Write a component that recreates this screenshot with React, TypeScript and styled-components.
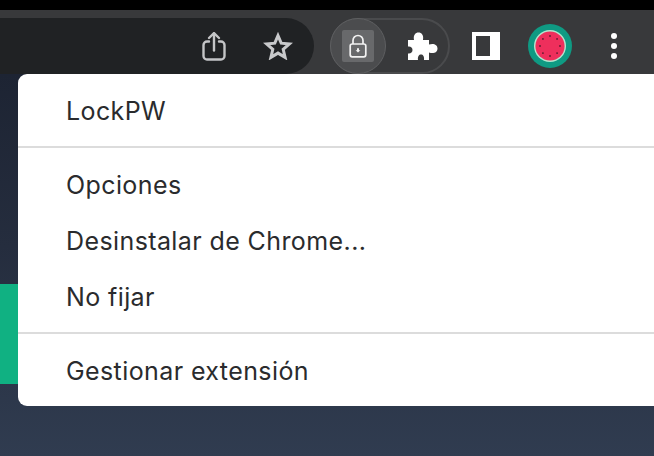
import styled, { createGlobalStyle } from "styled-components"

const GlobalStyle = createGlobalStyle`
    html, body {
        margin: 0;
        padding: 0;
        width: 654px;
        height: 456px;
        overflow: hidden;
        background: #000;
    }
`

const Screen = styled.div`
    position: relative;
    display: flex;
    flex-direction: column;
    width: 654px;
    height: 456px;
    overflow: hidden;
    background: #000;
    font-family: Inter, "Liberation Sans", sans-serif;
`

const Toolbar = styled.div`
    display: flex;
    align-items: flex-end;
    height: 64px;
    margin-top: 10px;
    background: #38393b;
    flex-shrink: 0;
`

const Omnibox = styled.div`
    display: flex;
    align-items: center;
    justify-content: flex-end;
    gap: 37px;
    width: 314px;
    height: 56px;
    padding-right: 21px;
    box-sizing: border-box;
    background: #202224;
    border-radius: 0 28px 28px 0;
    flex-shrink: 0;
`

const IconSlot = styled.span`
    display: flex;
    align-items: center;
    justify-content: center;
`

const PinnedGroup = styled.div`
    position: relative;
    display: flex;
    align-items: center;
    justify-content: flex-end;
    width: 120px;
    height: 56px;
    margin-left: 16px;
    padding-right: 10px;
    box-sizing: border-box;
    border: 2px solid #4a4b4d;
    border-radius: 28px;
`

const LockButton = styled.div`
    position: absolute;
    left: -2px;
    top: -2px;
    display: flex;
    align-items: center;
    justify-content: center;
    width: 56px;
    height: 56px;
    border: 1px solid #5e5f61;
    box-sizing: border-box;
    border-radius: 50%;
    background: #4b4c4e;
`

const LockTile = styled.div`
    display: flex;
    align-items: center;
    justify-content: center;
    width: 32px;
    height: 32px;
    border-radius: 2px;
    background: #68696b;
`

const RightIcons = styled.div`
    display: flex;
    align-items: center;
    height: 56px;
    margin-left: 22px;
`

const SidePanelIcon = styled.div`
    width: 28px;
    height: 28px;
    box-sizing: border-box;
    border: 4px solid #fff;
    border-right-width: 10px;
    border-left-width: 4px;
    background: #38393b;
`

const Avatar = styled.span`
    display: flex;
    margin-left: 28px;
`

const DotsIcon = styled.span`
    display: flex;
    flex-direction: column;
    gap: 4px;
    margin-left: 39px;
`

const Dot = styled.span`
    width: 6px;
    height: 6px;
    border-radius: 50%;
    background: #fff;
`

const Page = styled.div`
    flex: 1;
    display: flex;
    flex-direction: column;
    background: linear-gradient(180deg, #1d2433 0%, #252d3e 45%, #303c50 100%);
`

const TopBand = styled.div`
    height: 210px;
`

const GreenBanner = styled.div`
    height: 100px;
    background: #10b182;
`

const Menu = styled.div`
    position: absolute;
    left: 18px;
    top: 74px;
    width: 660px;
    height: 332px;
    box-sizing: border-box;
    background: #fff;
    border-radius: 9px;
    color: #2a2b2d;
`

const MenuGroup = styled.div`
    padding: 8px 0;
`

const MenuItem = styled.div`
    height: 56px;
    line-height: 59px;
    padding-left: 48px;
    font-size: 25px;
    font-weight: 400;
    letter-spacing: 0.4px;
    white-space: nowrap;
`

const Separator = styled.div`
    height: 2px;
    background: #dcdcdc;
`

const ShareIcon = () => (
    <svg width="24" height="30" viewBox="0 0 24 30" fill="none" stroke="#c4c5c7" strokeWidth="2.4" strokeLinecap="round" strokeLinejoin="round">
        <path d="M7 10.5H5a3.5 3.5 0 0 0-3.5 3.5v11A3.5 3.5 0 0 0 5 28.5h14a3.5 3.5 0 0 0 3.5-3.5V14a3.5 3.5 0 0 0-3.5-3.5h-2" />
        <path d="M12 19.5V2.5" />
        <path d="M7 7 12 2.2 17 7" />
    </svg>
)

const StarIcon = () => (
    <svg width="30" height="28" viewBox="0 0 30 28" fill="none" stroke="#c8c9cb" strokeWidth="3" strokeLinejoin="miter">
        <path d="M15 3.6 18.2 11.2 26.4 11.9 20.2 17.3 22.1 25.4 15 21.1 7.9 25.4 9.8 17.3 3.6 11.9 11.8 11.2Z" />
    </svg>
)

const LockIcon = () => (
    <svg width="18" height="24" viewBox="0 0 18 24" fill="none">
        <path d="M4 10V6.5a5 5 0 0 1 10 0V10" stroke="#f2f2f2" strokeWidth="1.7" />
        <rect x="1.2" y="10" width="15.6" height="12.8" rx="2" stroke="#f2f2f2" strokeWidth="1.7" />
        <path d="M8 14.2h2v2h1.4L9 18.6l-2.4-2.4H8Z" fill="#f2f2f2" />
    </svg>
)

const PuzzleIcon = () => (
    <svg width="30" height="29" viewBox="0 0 30 29" fill="#fff">
        <path d="M0 8H6C5 3 7.5 .5 10.5 .5C13.5 .5 16 3 15 8H21V12.5C25.5 11 29.5 12.5 29.5 16.5C29.5 20.5 25.5 22 21 20.5V28H16C16.5 24.5 15 22.5 13 22.5C11 22.5 9.5 24.5 10 28H0V21.5C2.5 22 4.5 20.5 4.5 18C4.5 15.5 2.5 14 0 14.5Z" />
    </svg>
)

const WatermelonIcon = () => (
    <svg width="44" height="44" viewBox="0 0 44 44">
        <circle cx="22" cy="22" r="22" fill="#0f9a83" />
        <circle cx="22" cy="22" r="16" fill="#b5e6cf" />
        <circle cx="22" cy="22" r="14.6" fill="#ee2f5c" />
        {[0, 45, 90, 135, 180, 225, 270, 315].map((a) => (
            <circle
                key={a}
                cx={22 + 10 * Math.cos((a * Math.PI) / 180)}
                cy={22 + 10 * Math.sin((a * Math.PI) / 180)}
                r="0.9"
                fill="#5c1a2e"
            />
        ))}
    </svg>
)

export default function App() {
    return (
        <Screen>
            <GlobalStyle />
            <Toolbar>
                <Omnibox>
                    <IconSlot>
                        <ShareIcon />
                    </IconSlot>
                    <IconSlot>
                        <StarIcon />
                    </IconSlot>
                </Omnibox>
                <PinnedGroup>
                    <LockButton>
                        <LockTile>
                            <LockIcon />
                        </LockTile>
                    </LockButton>
                    <PuzzleIcon />
                </PinnedGroup>
                <RightIcons>
                    <SidePanelIcon />
                    <Avatar>
                        <WatermelonIcon />
                    </Avatar>
                    <DotsIcon>
                        <Dot />
                        <Dot />
                        <Dot />
                    </DotsIcon>
                </RightIcons>
            </Toolbar>
            <Page>
                <TopBand />
                <GreenBanner />
            </Page>
            <Menu>
                <MenuGroup>
                    <MenuItem>LockPW</MenuItem>
                </MenuGroup>
                <Separator />
                <MenuGroup>
                    <MenuItem>Opciones</MenuItem>
                    <MenuItem>Desinstalar de Chrome...</MenuItem>
                    <MenuItem>No fijar</MenuItem>
                </MenuGroup>
                <Separator />
                <MenuGroup>
                    <MenuItem>Gestionar extensión</MenuItem>
                </MenuGroup>
            </Menu>
        </Screen>
    )
}
